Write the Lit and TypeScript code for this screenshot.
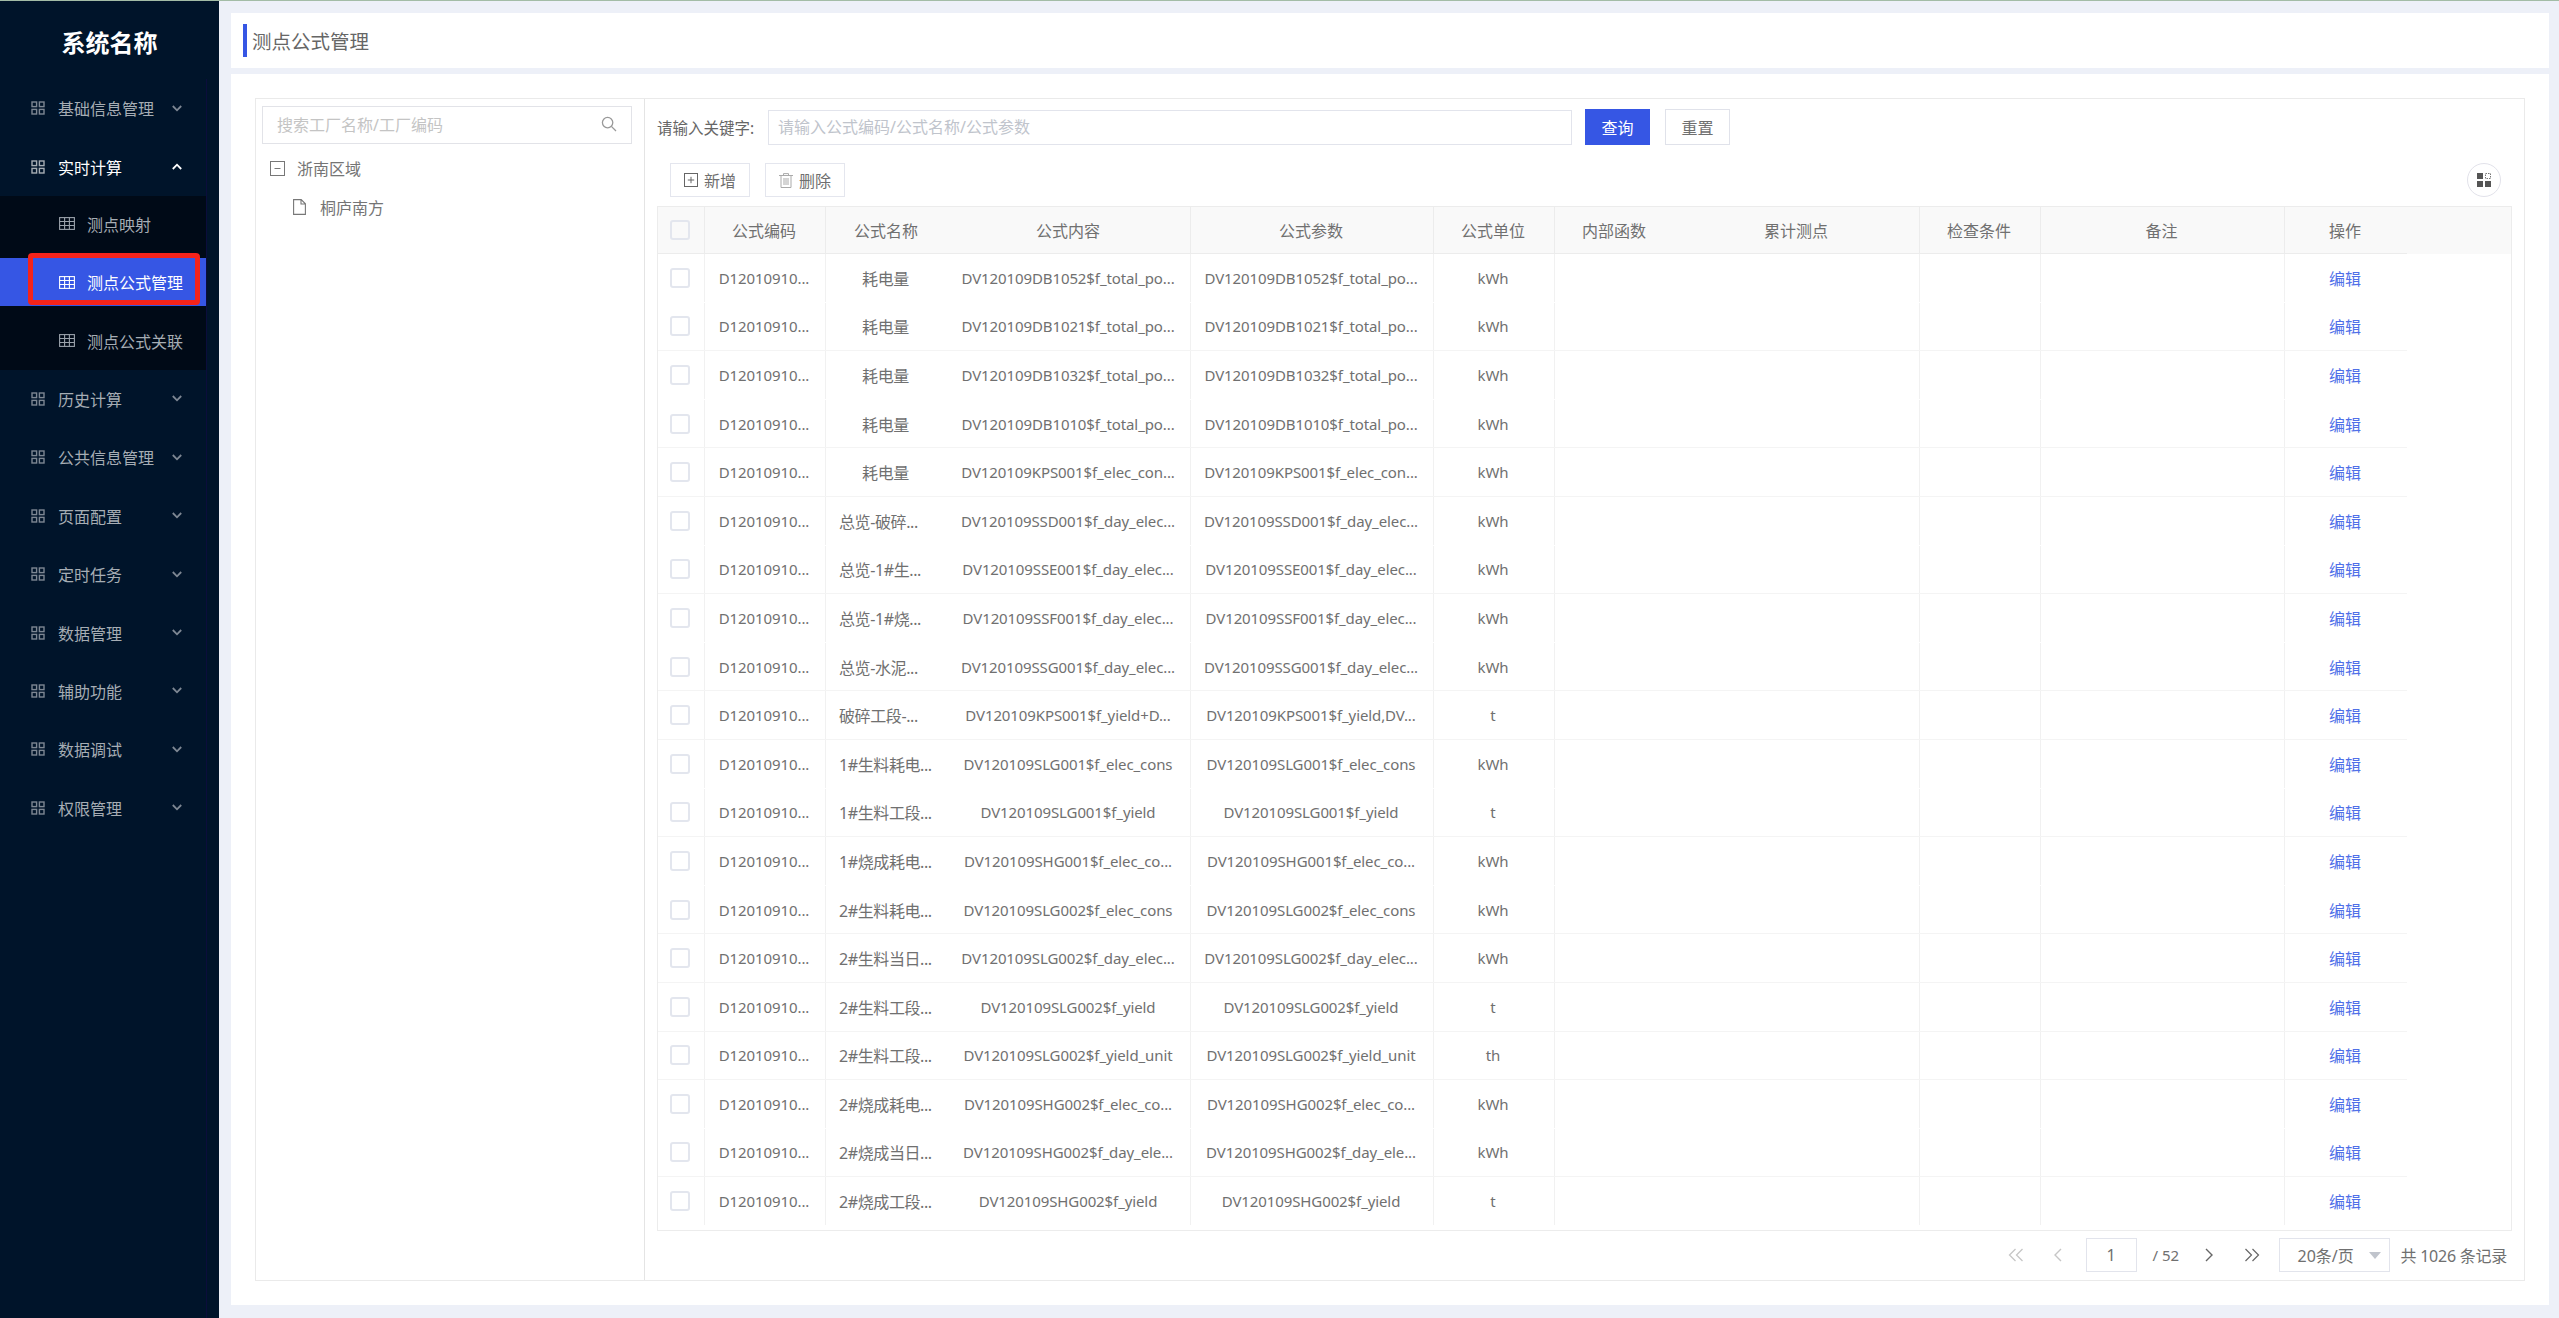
import { LitElement, html, css, svg } from "lit";
import { customElement } from "lit/decorators.js";

const grid2 = svg`<svg class="ic" width="14" height="14" viewBox="0 0 14 14" fill="none" stroke="currentColor" stroke-width="1.4"><rect x="1" y="1" width="4.6" height="4.6"/><rect x="8.4" y="1" width="4.6" height="4.6"/><rect x="1" y="8.4" width="4.6" height="4.6"/><rect x="8.4" y="8.4" width="4.6" height="4.6"/></svg>`;
const tableIc = svg`<svg class="ic" width="16" height="13" viewBox="0 0 16 13" fill="none" stroke="currentColor" stroke-width="1.1"><rect x=".6" y=".6" width="14.8" height="11.8"/><path d="M.6 4.5h14.8M.6 8.5h14.8M5.6.6v11.8M10.4.6v11.8"/></svg>`;
const down = svg`<svg class="chev" width="10" height="7" viewBox="0 0 10 7" fill="none" stroke="currentColor" stroke-width="1.8"><path d="M.8 1l4.2 4.3L9.2 1"/></svg>`;
const up = svg`<svg class="chev" width="10" height="7" viewBox="0 0 10 7" fill="none" stroke="currentColor" stroke-width="1.8"><path d="M.8 6L5 1.7 9.2 6"/></svg>`;

const menusAfter = ["历史计算", "公共信息管理", "页面配置", "定时任务", "数据管理", "辅助功能", "数据调试", "权限管理"];

type Row = [string, string, string, string];
const rows: Row[] = [
  ["耗电量", "DV120109DB1052$f_total_po...", "DV120109DB1052$f_total_po...", "kWh"],
  ["耗电量", "DV120109DB1021$f_total_po...", "DV120109DB1021$f_total_po...", "kWh"],
  ["耗电量", "DV120109DB1032$f_total_po...", "DV120109DB1032$f_total_po...", "kWh"],
  ["耗电量", "DV120109DB1010$f_total_po...", "DV120109DB1010$f_total_po...", "kWh"],
  ["耗电量", "DV120109KPS001$f_elec_con...", "DV120109KPS001$f_elec_con...", "kWh"],
  ["总览-破碎...", "DV120109SSD001$f_day_elec...", "DV120109SSD001$f_day_elec...", "kWh"],
  ["总览-1#生...", "DV120109SSE001$f_day_elec...", "DV120109SSE001$f_day_elec...", "kWh"],
  ["总览-1#烧...", "DV120109SSF001$f_day_elec...", "DV120109SSF001$f_day_elec...", "kWh"],
  ["总览-水泥...", "DV120109SSG001$f_day_elec...", "DV120109SSG001$f_day_elec...", "kWh"],
  ["破碎工段-...", "DV120109KPS001$f_yield+D...", "DV120109KPS001$f_yield,DV...", "t"],
  ["1#生料耗电...", "DV120109SLG001$f_elec_cons", "DV120109SLG001$f_elec_cons", "kWh"],
  ["1#生料工段...", "DV120109SLG001$f_yield", "DV120109SLG001$f_yield", "t"],
  ["1#烧成耗电...", "DV120109SHG001$f_elec_co...", "DV120109SHG001$f_elec_co...", "kWh"],
  ["2#生料耗电...", "DV120109SLG002$f_elec_cons", "DV120109SLG002$f_elec_cons", "kWh"],
  ["2#生料当日...", "DV120109SLG002$f_day_elec...", "DV120109SLG002$f_day_elec...", "kWh"],
  ["2#生料工段...", "DV120109SLG002$f_yield", "DV120109SLG002$f_yield", "t"],
  ["2#生料工段...", "DV120109SLG002$f_yield_unit", "DV120109SLG002$f_yield_unit", "th"],
  ["2#烧成耗电...", "DV120109SHG002$f_elec_co...", "DV120109SHG002$f_elec_co...", "kWh"],
  ["2#烧成当日...", "DV120109SHG002$f_day_ele...", "DV120109SHG002$f_day_ele...", "kWh"],
  ["2#烧成工段...", "DV120109SHG002$f_yield", "DV120109SHG002$f_yield", "t"],
];
const linedRows = new Set([2, 4, 5, 7, 9, 10, 12, 14, 15, 16, 17, 19]);
const heads = ["公式编码", "公式名称", "公式内容", "公式参数", "公式单位", "内部函数", "累计测点", "检查条件", "备注", "操作"];
const headBorder = [true, false, true, true, true, false, true, true, true, false];

@customElement("app-root")
export class AppRoot extends LitElement {
  static styles = css`
    :host { display: flex; flex-direction: column; height: 100vh; min-height: 1318px; overflow: hidden;
      font-family: "Noto Sans", "Noto Sans CJK SC", sans-serif; font-size: 16px; color: #707070; background: #edf0f8; }
    * { box-sizing: border-box; }
    .strip { height: 1px; background: #a3bca6; flex: none; }
    .body { flex: 1; display: flex; min-height: 0; }

    .side { width: 219px; flex: none; background: #00142a; display: flex; flex-direction: column; }
    .logo { height: 78px; flex: none; display: flex; align-items: center; justify-content: center; padding-top: 2px;
      color: #fff; font-size: 24px; font-weight: 700; }
    .menu { flex: 1; width: 207px; border-right: 1px solid #0b0d3c; }
    .item { height: 58.4px; display: flex; align-items: center; padding: 0 24px 0 31px; color: #a6adb4; }
    .item .ic { color: #7d8793; flex: none; margin-right: 13px; }
    .item .chev { color: #7d8793; margin-left: auto; }
    .item.open { color: #fff; }
    .item.open .chev { color: #fff; }
    .item.open .ic { color: #a6adb4; }
    .sub { height: 174px; background: #000a17; display: flex; flex-direction: column; gap: 10.5px; padding-top: 4px; }
    .sub-item { height: 48px; flex: none; position: relative; display: flex; align-items: center; padding-left: 59px; color: #a6adb4; }
    .sub-item .ic { color: #9aa2ab; margin-right: 12px; flex: none; }
    .sub-item.active { background: #3656e4; color: #fff; }
    .sub-item.active .ic { color: #fff; }
    .mark { position: absolute; left: 28px; top: -5px; width: 172px; height: 52px; border: 5px solid #f5231a; border-radius: 4px; }

    .main { flex: 1; min-width: 0; display: flex; flex-direction: column; padding: 12px 10px 13px 12px; gap: 6px; }
    .title { height: 55px; flex: none; background: #fff; padding: 11px 12px; }
    .title span { display: flex; align-items: center; height: 33px; border-left: 4px solid #3656e4; padding-left: 5px;
      font-size: 19.5px; color: #666; }
    .card { flex: 1; min-height: 0; background: #fff; padding: 24px; }
    .frame { height: 100%; border: 1px solid #eaeaea; display: flex; }
    .left { width: 389px; flex: none; border-right: 1px solid #e4e4e4; padding: 7px 12px 0 6px; }
    .search { height: 38px; border: 1px solid #e2e3e8; display: flex; align-items: center; padding: 0 14px 2px 14px;
      color: #c4c4c4; justify-content: space-between; }
    .search svg { color: #999; }
    .tree-row { display: flex; align-items: center; color: #757575; }
    .tree-row svg { flex: none; color: #777; }
    .t1 { height: 38px; margin-top: 5px; padding-left: 8px; gap: 12px; }
    .t2 { height: 40px; padding-left: 31px; gap: 14px; }

    .right { flex: 1; min-width: 0; display: flex; flex-direction: column; padding: 10px 12px 8px 12px; }
    .query { height: 36px; flex: none; display: flex; align-items: center; }
    .query label { width: 111px; flex: none; white-space: nowrap; color: #666; font-size: 15.5px; }
    .input { width: 804px; height: 35px; border: 1px solid #e2e4ec; display: flex; align-items: center; padding: 0 0 2px 9px; color: #c0c4cc; }
    .btn { height: 36px; width: 65px; margin-left: 13px; display: flex; align-items: center; justify-content: center;
      border: 1px solid #e0e2ea; color: #707070; background: #fff; padding-bottom: 1px; }
    .btn.primary { background: #3656e4; border-color: #3656e4; color: #fff; }
    .btn + .btn { margin-left: 15px; }
    .tools { height: 34px; margin-top: 18px; flex: none; display: flex; align-items: center; padding: 0 11px 0 13px; gap: 15px; }
    .tool { width: 80px; height: 34px; border: 1px solid #e4e6ee; display: flex; align-items: center; justify-content: center; gap: 6px; color: #6f6f6f; }
    .cols { margin-left: auto; width: 34px; height: 34px; border: 1px solid #e2e2ea; border-radius: 50%; display: flex; align-items: center; justify-content: center; }

    .table { flex: 1; min-height: 0; margin-top: 9px; border: 1px solid #ececec; }
    .head { background: #f9f9f9; }
    .grid { display: grid; width: 1749px; grid-template-columns: 47px 121px 122px 243px 243px 121px 120px 245px 121px 244px 122px; }
    .head .grid { height: 47px; border-bottom: 1px solid #ececec; }
    .row { height: 48.6px; border-bottom: 1px solid transparent; }
    .row.lined { border-bottom-color: #f4f4f4; }
    .cell { display: flex; align-items: center; justify-content: center; white-space: nowrap; overflow: hidden; min-width: 0; color: #707070; padding-right: 2px; }
    .cell.b { border-right: 1px solid #f1f1f1; }
    .head .cell.b { border-right-color: #ececec; }
    .lat { font-size: 15px; letter-spacing: -0.1px; }
    .name { letter-spacing: -0.4px; padding-right: 3px; }
    .name.cut { justify-content: flex-start; padding: 0 0 0 13px; }
    .link { color: #4f6fe8; }
    .box { width: 20px; height: 20px; border: 2px solid #e3e6ee; border-radius: 3px; background: #fff; }
    .head .box { background: #f9f9f9; }

    .pager { height: 34px; margin-top: 7px; flex: none; display: flex; align-items: center; justify-content: flex-end; padding-right: 5px; color: #707070; }
    .pg { width: 42px; display: flex; align-items: center; justify-content: center; color: #666; }
    .pg.off { color: #c6c6c6; }
    .num { width: 51px; height: 34px; margin-left: 7px; border: 1px solid #e2e4ec; display: flex; align-items: center; justify-content: center; }
    .tot { width: 26px; margin: 0 10px 0 16px; white-space: nowrap; font-size: 15px; }
    .sel { width: 111px; height: 34px; margin-left: 6px; border: 1px solid #e2e4ec; display: flex; align-items: center; padding-left: 18px; gap: 15px; }
    .sel i { width: 0; height: 0; border-left: 6px solid transparent; border-right: 6px solid transparent; border-top: 7px solid #c0c4cc; }
    .count { margin-left: 11px; white-space: nowrap; letter-spacing: -0.25px; }
  `;

  private menuItem(t: string) {
    return html`<div class="item">${grid2}<span>${t}</span>${down}</div>`;
  }

  render() {
    return html`
      <div class="strip"></div>
      <div class="body">
        <aside class="side">
          <div class="logo">系统名称</div>
          <nav class="menu">
            ${this.menuItem("基础信息管理")}
            <div class="item open">${grid2}<span>实时计算</span>${up}</div>
            <div class="sub">
              <div class="sub-item">${tableIc}<span>测点映射</span></div>
              <div class="sub-item active">${tableIc}<span>测点公式管理</span><div class="mark"></div></div>
              <div class="sub-item">${tableIc}<span>测点公式关联</span></div>
            </div>
            ${menusAfter.map((m) => this.menuItem(m))}
          </nav>
        </aside>
        <main class="main">
          <div class="title"><span>测点公式管理</span></div>
          <section class="card">
            <div class="frame">
              <div class="left">
                <div class="search">
                  <span>搜索工厂名称/工厂编码</span>
                  <svg width="16" height="16" viewBox="0 0 16 16" fill="none" stroke="currentColor" stroke-width="1.3"><circle cx="6.6" cy="6.6" r="5.2"/><path d="M10.4 10.4l4.6 4.6"/></svg>
                </div>
                <div class="tree-row t1">
                  <svg width="15" height="15" viewBox="0 0 15 15" fill="none" stroke="currentColor" stroke-width="1"><rect x=".5" y=".5" width="14" height="14"/><path d="M4.5 7.5h6"/></svg>
                  <span>浙南区域</span>
                </div>
                <div class="tree-row t2">
                  <svg width="13" height="16" viewBox="0 0 13 16" fill="none" stroke="currentColor" stroke-width="1.1"><path d="M.6.6h7.6l4.2 4.2v10.6H.6zM8 .6v4.4h4.4"/></svg>
                  <span>桐庐南方</span>
                </div>
              </div>
              <div class="right">
                <div class="query">
                  <label>请输入关键字:</label>
                  <div class="input">请输入公式编码/公式名称/公式参数</div>
                  <div class="btn primary">查询</div>
                  <div class="btn">重置</div>
                </div>
                <div class="tools">
                  <div class="tool">
                    <svg width="14" height="14" viewBox="0 0 14 14" fill="none" stroke="#666" stroke-width="1"><rect x=".5" y=".5" width="13" height="13"/><path d="M7 3.8v6.4M3.8 7h6.4"/></svg>
                    <span>新增</span>
                  </div>
                  <div class="tool">
                    <svg width="14" height="15" viewBox="0 0 14 15" fill="none" stroke="#aaa" stroke-width="1"><path d="M0 2.5h14M4.5 2.5V.6h5v1.9M2 2.5v12h10v-12M5 5v7M7 5v7M9 5v7"/></svg>
                    <span>删除</span>
                  </div>
                  <div class="cols">
                    <svg width="14" height="14" viewBox="0 0 14 14"><rect x="0" y="0" width="6" height="6" fill="#555"/><rect x="0" y="8" width="6" height="6" fill="#555"/><rect x="8" y="8" width="6" height="6" fill="#555"/><rect x="8.5" y=".5" width="5" height="5" fill="none" stroke="#777" stroke-dasharray="1.5 1"/></svg>
                  </div>
                </div>
                <div class="table">
                  <div class="head">
                    <div class="grid">
                      <div class="cell b"><div class="box"></div></div>
                      ${heads.map((h, i) => html`<div class="cell ${headBorder[i] ? "b" : ""}">${h}</div>`)}
                    </div>
                  </div>
                  ${rows.map((r, i) => html`
                    <div class="grid row ${linedRows.has(i + 1) ? "lined" : ""}">
                      <div class="cell b"><div class="box"></div></div>
                      <div class="cell b lat">D12010910...</div>
                      <div class="cell name ${r[0].endsWith("...") ? "cut" : ""}">${r[0]}</div>
                      <div class="cell b lat">${r[1]}</div>
                      <div class="cell b lat">${r[2]}</div>
                      <div class="cell b lat">${r[3]}</div>
                      <div class="cell"></div>
                      <div class="cell b"></div>
                      <div class="cell b"></div>
                      <div class="cell b"></div>
                      <div class="cell link">编辑</div>
                    </div>`)}
                </div>
                <div class="pager">
                  <div class="pg off"><svg width="16" height="14" viewBox="0 0 16 14" fill="none" stroke="currentColor" stroke-width="1.3"><path d="M7.5 1L1.5 7l6 6M14.5 1l-6 6 6 6"/></svg></div>
                  <div class="pg off"><svg width="9" height="14" viewBox="0 0 9 14" fill="none" stroke="currentColor" stroke-width="1.4"><path d="M8 1L2 7l6 6"/></svg></div>
                  <div class="num">1</div>
                  <div class="tot">/ 52</div>
                  <div class="pg"><svg width="9" height="14" viewBox="0 0 9 14" fill="none" stroke="currentColor" stroke-width="1.4"><path d="M1 1l6 6-6 6"/></svg></div>
                  <div class="pg"><svg width="16" height="14" viewBox="0 0 16 14" fill="none" stroke="currentColor" stroke-width="1.2"><path d="M1.5 1l6 6-6 6M8.5 1l6 6-6 6"/></svg></div>
                  <div class="sel"><span>20条/页</span><i></i></div>
                  <div class="count">共 1026 条记录</div>
                </div>
              </div>
            </div>
          </section>
        </main>
      </div>
    `;
  }
}
